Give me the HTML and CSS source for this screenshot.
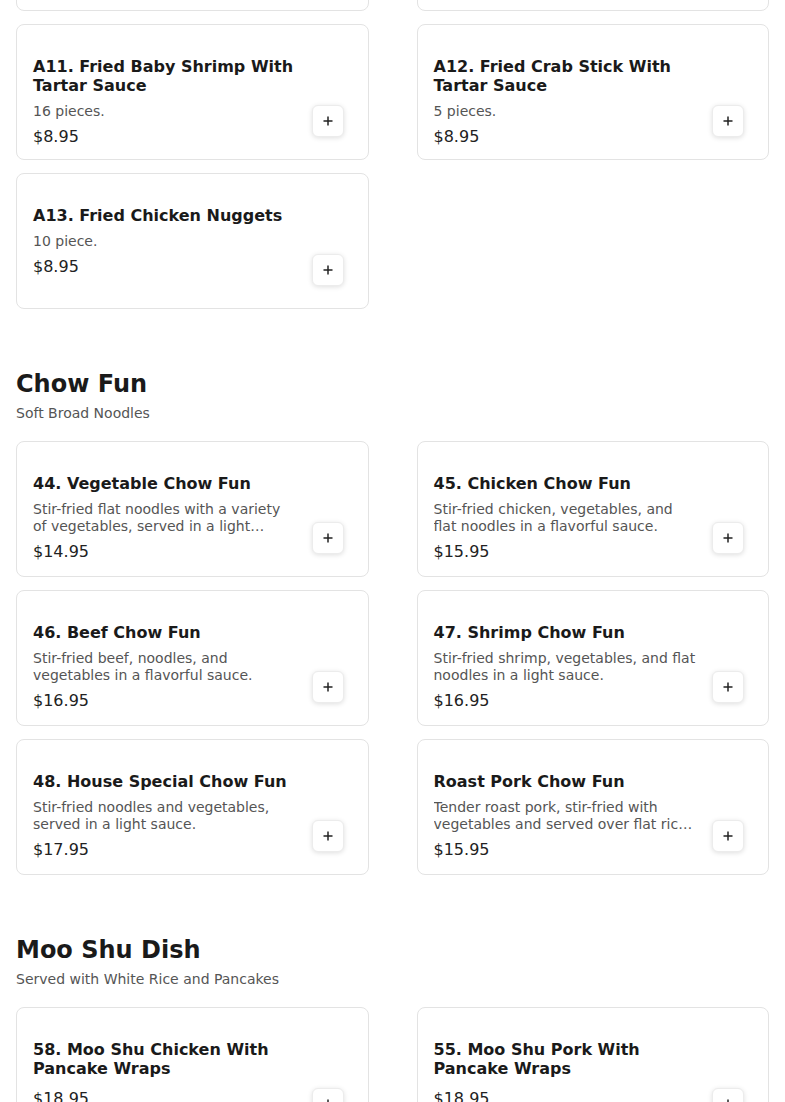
FILE: index.html
```html
<html>

<head>
  <meta charset="utf-8" />
  <link rel="stylesheet" href="styles.css">
</head>

<body>
  <main class="menu">

    <section class="menu-section">
      <h2 class="section-title">Appetizers</h2>
      <p class="section-sub">Served with Sweet and Sour Sauce</p>
      <div class="item-grid">
        <div class="item-card">
          <div class="item-info">
            <h3 class="item-title">A9. Fried Chicken Wings</h3>
            <p class="item-desc">6 pieces.</p>
            <div class="item-price">$9.95</div>
          </div>
          <button class="add-btn" aria-label="Add"><svg viewBox="0 0 12 12" width="12" height="12"><path d="M6 1.5v9M1.5 6h9" /></svg></button>
        </div>
        <div class="item-card">
          <div class="item-info">
            <h3 class="item-title">A10. Fried Wonton</h3>
            <p class="item-desc">10 pieces.</p>
            <div class="item-price">$7.95</div>
          </div>
          <button class="add-btn" aria-label="Add"><svg viewBox="0 0 12 12" width="12" height="12"><path d="M6 1.5v9M1.5 6h9" /></svg></button>
        </div>
        <div class="item-card">
          <div class="item-info">
            <h3 class="item-title">A11. Fried Baby Shrimp With Tartar Sauce</h3>
            <p class="item-desc">16 pieces.</p>
            <div class="item-price">$8.95</div>
          </div>
          <button class="add-btn" aria-label="Add"><svg viewBox="0 0 12 12" width="12" height="12"><path d="M6 1.5v9M1.5 6h9" /></svg></button>
        </div>
        <div class="item-card">
          <div class="item-info">
            <h3 class="item-title">A12. Fried Crab Stick With Tartar Sauce</h3>
            <p class="item-desc">5 pieces.</p>
            <div class="item-price">$8.95</div>
          </div>
          <button class="add-btn" aria-label="Add"><svg viewBox="0 0 12 12" width="12" height="12"><path d="M6 1.5v9M1.5 6h9" /></svg></button>
        </div>
        <div class="item-card">
          <div class="item-info">
            <h3 class="item-title">A13. Fried Chicken Nuggets</h3>
            <p class="item-desc">10 piece.</p>
            <div class="item-price">$8.95</div>
          </div>
          <button class="add-btn" aria-label="Add"><svg viewBox="0 0 12 12" width="12" height="12"><path d="M6 1.5v9M1.5 6h9" /></svg></button>
        </div>
      </div>
    </section>

    <section class="menu-section">
      <h2 class="section-title">Chow Fun</h2>
      <p class="section-sub">Soft Broad Noodles</p>
      <div class="item-grid">
        <div class="item-card">
          <div class="item-info">
            <h3 class="item-title">44. Vegetable Chow Fun</h3>
            <p class="item-desc">Stir-fried flat noodles with a variety of vegetables, served in a light sauce.</p>
            <div class="item-price">$14.95</div>
          </div>
          <button class="add-btn" aria-label="Add"><svg viewBox="0 0 12 12" width="12" height="12"><path d="M6 1.5v9M1.5 6h9" /></svg></button>
        </div>
        <div class="item-card">
          <div class="item-info">
            <h3 class="item-title">45. Chicken Chow Fun</h3>
            <p class="item-desc">Stir-fried chicken, vegetables, and flat noodles in a flavorful sauce.</p>
            <div class="item-price">$15.95</div>
          </div>
          <button class="add-btn" aria-label="Add"><svg viewBox="0 0 12 12" width="12" height="12"><path d="M6 1.5v9M1.5 6h9" /></svg></button>
        </div>
        <div class="item-card">
          <div class="item-info">
            <h3 class="item-title">46. Beef Chow Fun</h3>
            <p class="item-desc">Stir-fried beef, noodles, and vegetables in a flavorful sauce.</p>
            <div class="item-price">$16.95</div>
          </div>
          <button class="add-btn" aria-label="Add"><svg viewBox="0 0 12 12" width="12" height="12"><path d="M6 1.5v9M1.5 6h9" /></svg></button>
        </div>
        <div class="item-card">
          <div class="item-info">
            <h3 class="item-title">47. Shrimp Chow Fun</h3>
            <p class="item-desc">Stir-fried shrimp, vegetables, and flat noodles in a light sauce.</p>
            <div class="item-price">$16.95</div>
          </div>
          <button class="add-btn" aria-label="Add"><svg viewBox="0 0 12 12" width="12" height="12"><path d="M6 1.5v9M1.5 6h9" /></svg></button>
        </div>
        <div class="item-card">
          <div class="item-info">
            <h3 class="item-title">48. House Special Chow Fun</h3>
            <p class="item-desc">Stir-fried noodles and vegetables, served in a light sauce.</p>
            <div class="item-price">$17.95</div>
          </div>
          <button class="add-btn" aria-label="Add"><svg viewBox="0 0 12 12" width="12" height="12"><path d="M6 1.5v9M1.5 6h9" /></svg></button>
        </div>
        <div class="item-card">
          <div class="item-info">
            <h3 class="item-title">Roast Pork Chow Fun</h3>
            <p class="item-desc">Tender roast pork, stir-fried with vegetables and served over flat rice noodles.</p>
            <div class="item-price">$15.95</div>
          </div>
          <button class="add-btn" aria-label="Add"><svg viewBox="0 0 12 12" width="12" height="12"><path d="M6 1.5v9M1.5 6h9" /></svg></button>
        </div>
      </div>
    </section>

    <section class="menu-section">
      <h2 class="section-title">Moo Shu Dish</h2>
      <p class="section-sub">Served with White Rice and Pancakes</p>
      <div class="item-grid">
        <div class="item-card">
          <div class="item-info">
            <h3 class="item-title">58. Moo Shu Chicken With Pancake Wraps</h3>
            <div class="item-price">$18.95</div>
          </div>
          <button class="add-btn" aria-label="Add"><svg viewBox="0 0 12 12" width="12" height="12"><path d="M6 1.5v9M1.5 6h9" /></svg></button>
        </div>
        <div class="item-card">
          <div class="item-info">
            <h3 class="item-title">55. Moo Shu Pork With Pancake Wraps</h3>
            <div class="item-price">$18.95</div>
          </div>
          <button class="add-btn" aria-label="Add"><svg viewBox="0 0 12 12" width="12" height="12"><path d="M6 1.5v9M1.5 6h9" /></svg></button>
        </div>
      </div>
    </section>

  </main>
</body>

</html>
```

FILE: styles.css
```css
body {
  margin: 0;
  background-color: #fff;
  font-family: "DejaVu Sans", Verdana, sans-serif;
  color: #1a1a1a;
}

/* page is shown scrolled down into the appetizers */
.menu {
  margin-top: -196px;
  padding: 0 16px 40px;
}

.menu-section + .menu-section {
  margin-top: 61px;
}

.section-title {
  margin: 0;
  font-size: 24px;
  line-height: 29px;
  font-weight: bold;
  color: #1a1a1a;
}

.section-sub {
  margin: 6px 0 0;
  font-size: 14px;
  line-height: 17px;
  color: #555;
}

.item-grid {
  display: grid;
  grid-template-columns: 1fr 1fr;
  column-gap: 48px;
  row-gap: 13px;
  margin-top: 19px;
}

.item-card {
  display: flex;
  gap: 14px;
  height: 136px;
  box-sizing: border-box;
  padding: 32px 24px 22px 16px;
  border: 1px solid #e3e3e3;
  border-radius: 8px;
  background-color: #fff;
  overflow: hidden;
}

.item-info {
  flex: 1;
  min-width: 0;
}

.item-title {
  margin: 0 0 8px;
  font-size: 16px;
  line-height: 19px;
  font-weight: bold;
  color: #1a1a1a;
}

.item-desc {
  margin: 0 0 7px;
  font-size: 14px;
  line-height: 17px;
  color: #555;
  display: -webkit-box;
  -webkit-line-clamp: 2;
  -webkit-box-orient: vertical;
  overflow: hidden;
}

.item-title + .item-price {
  margin-top: 11px;
}

.item-price {
  font-size: 16px;
  line-height: 19px;
  color: #222;
}

.add-btn {
  flex: none;
  align-self: flex-end;
  width: 32px;
  height: 32px;
  padding: 0;
  display: flex;
  align-items: center;
  justify-content: center;
  background-color: #fff;
  border: 1px solid #ececec;
  border-radius: 6px;
  box-shadow: 0 1px 5px rgba(0, 0, 0, 0.13);
  cursor: pointer;
}

.add-btn svg {
  fill: none;
  stroke: #222;
  stroke-width: 1.5;
}
```
